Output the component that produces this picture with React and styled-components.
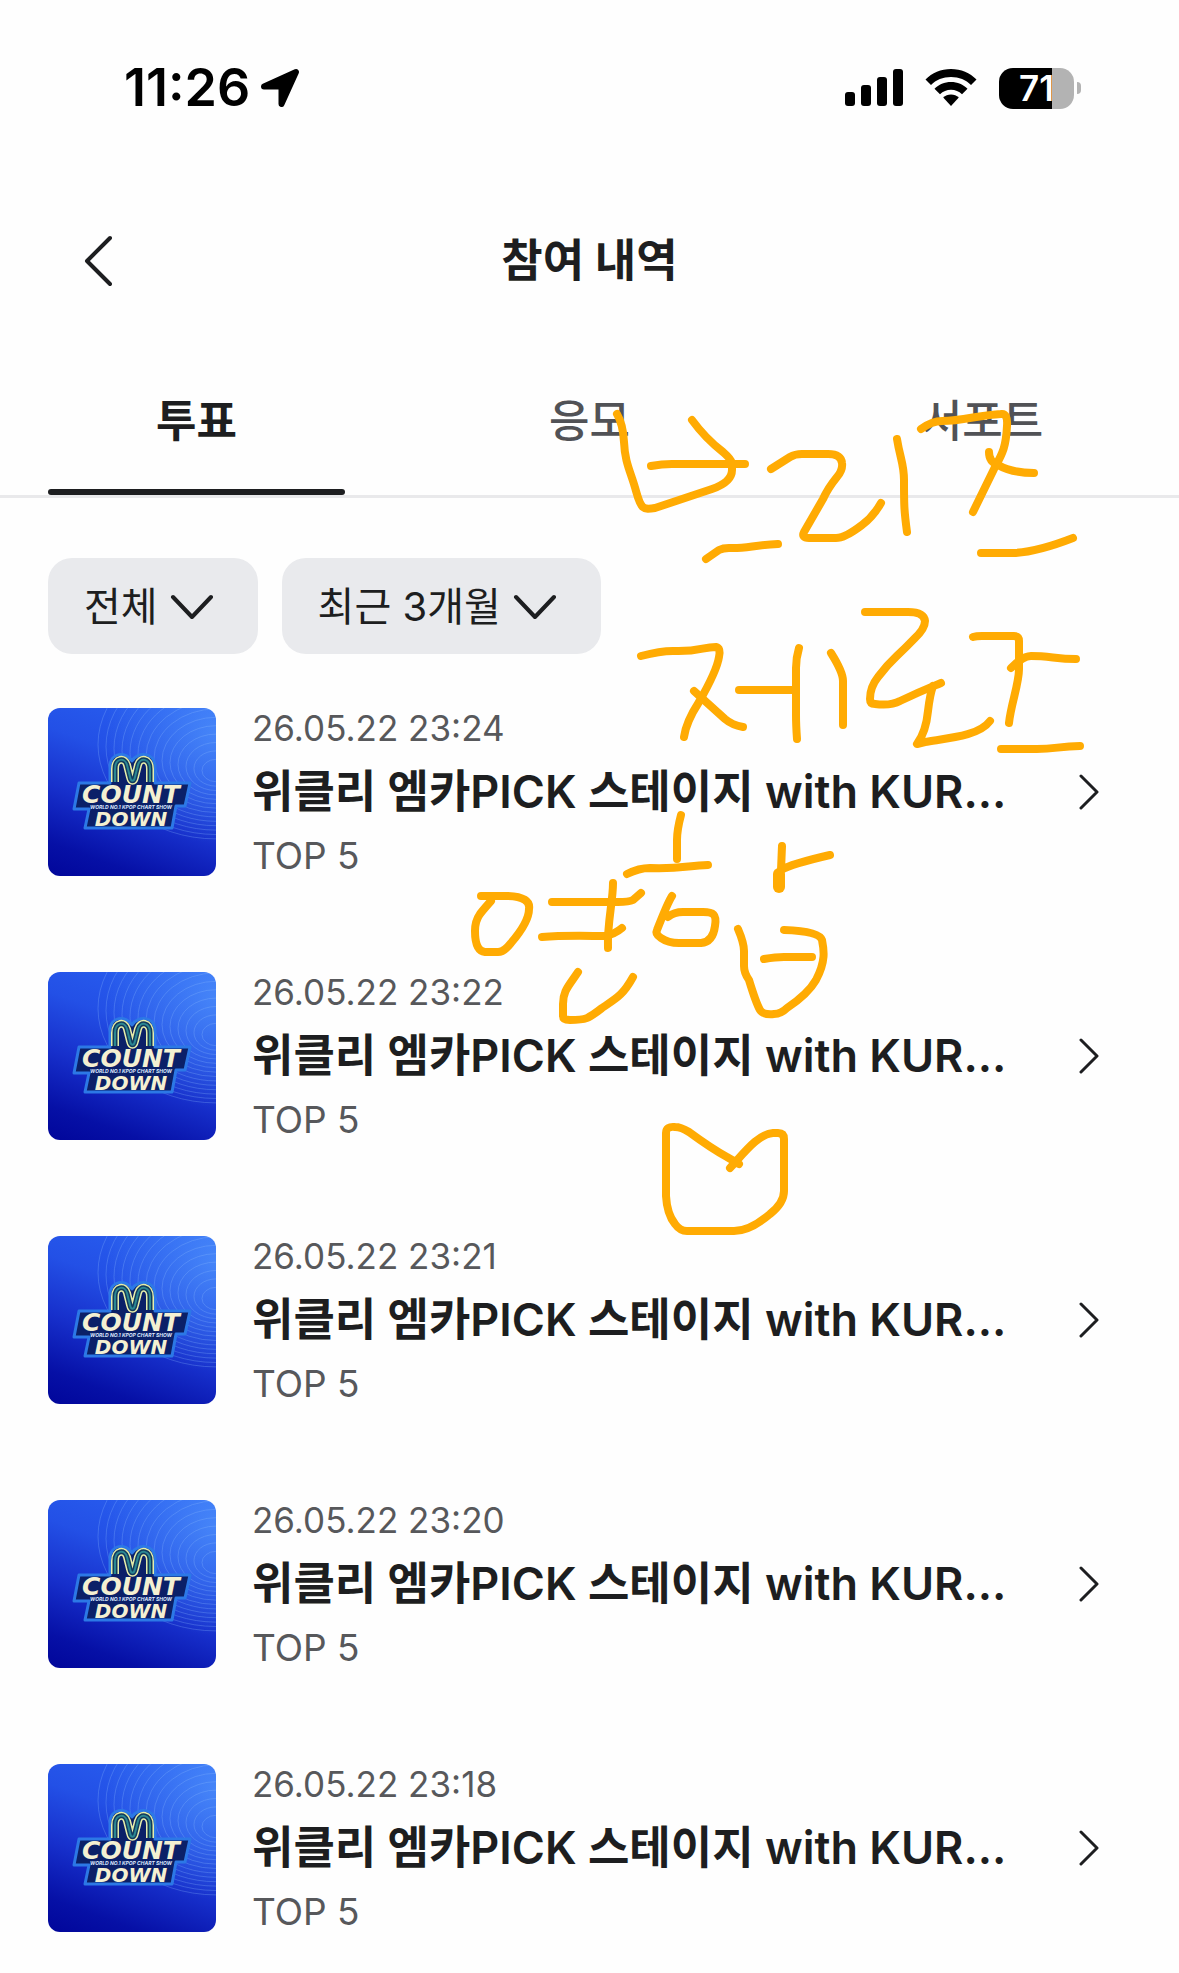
import { useState } from 'react';
import styled, { createGlobalStyle } from 'styled-components';

const GlobalStyle = createGlobalStyle`
    * {
        box-sizing: border-box;
    }
    body {
        margin: 0;
        background: #fefefe;
        color: #1d1e20;
        font-family: Inter, 'Noto Sans CJK KR', sans-serif;
    }
    button, select {
        font-family: inherit;
        color: inherit;
    }
`;

const Page = styled.div`
    position: relative;
    padding-bottom: 40px;
`;
const StatusBar = styled.div`
    display: flex;
    align-items: center;
    justify-content: space-between;
    height: 176px;
    padding: 0 98px 0 124px;
    color: #000;
`;
const StatusGroup = styled.div`
    display: flex;
    align-items: center;
    gap: ${({ $gap }) => $gap}px;
`;
const Time = styled.span`
    font-size: 52px;
    line-height: 60px;
    font-weight: 600;
`;
const Battery = styled.div`
    display: flex;
    align-items: center;
    gap: 3px;
`;
const BatteryBody = styled.div`
    width: 75px;
    height: 41px;
    border-radius: 14px;
    background: linear-gradient(to right, #000 71%, #b3b3b3 71%);
    color: #fff;
    font-size: 35px;
    line-height: 41px;
    font-weight: 600;
    text-align: center;
`;
const BatteryTip = styled.div`
    width: 4px;
    height: 12px;
    border-radius: 0 6px 6px 0;
    background: #b3b3b3;
`;

const Header = styled.header`
    display: grid;
    grid-template-columns: 100px 1fr 100px;
    align-items: center;
    height: 170px;
    padding: 0 48px;
`;
const BackButton = styled.button`
    display: flex;
    padding: 0 0 0 36px;
    border: 0;
    background: none;
`;
const Title = styled.h1`
    margin: 0;
    font-size: 45px;
    line-height: 60px;
    font-weight: 700;
    text-align: center;
`;

const Tabs = styled.div`
    display: flex;
    border-bottom: 3px solid #e9e9eb;
`;
const Tab = styled.button`
    display: flex;
    flex: 1;
    flex-direction: column;
    justify-content: flex-end;
    height: 149px;
    padding: 0 48px;
    border: 0;
    background: none;
    color: ${({ $active }) => ($active ? '#1d1e20' : '#515256')};
    font-size: 44px;
    font-weight: ${({ $active }) => ($active ? 700 : 500)};
    text-align: center;

    &::after {
        content: '';
        width: 100%;
        height: 6px;
        border-radius: 3px;
        background: ${({ $active }) => ($active ? '#1d1e20' : 'transparent')};
    }
`;
const TabLabel = styled.span`
    display: block;
    width: 100%;
    padding-bottom: 36px;
    line-height: 64px;
`;

const Filters = styled.div`
    display: flex;
    gap: 24px;
    padding: 60px 48px 54px;
`;
const Filter = styled.label`
    display: grid;
    align-items: center;

    & > * {
        grid-area: 1 / 1;
    }
    svg {
        justify-self: end;
        margin-right: 44px;
        pointer-events: none;
    }
`;
const FilterSelect = styled.select`
    appearance: none;
    height: 96px;
    padding: 0 100px 0 36px;
    border: 0;
    border-radius: 24px;
    background: #e9eaed;
    font-size: 40px;
    field-sizing: content;
`;

const List = styled.ul`
    display: flex;
    flex-direction: column;
    gap: 96px;
    margin: 0;
    padding: 0 48px;
    list-style: none;
`;
const Row = styled.a`
    display: flex;
    align-items: center;
    height: 168px;
    padding-right: 32px;
    color: inherit;
    text-decoration: none;
`;
const Thumb = styled.div`
    flex: none;
    width: 168px;
    height: 168px;
    margin-right: 36px;
    overflow: hidden;
    border-radius: 12px;
    background:
        radial-gradient(circle at 100% 15%, rgba(90, 160, 255, 0.6), rgba(60, 120, 255, 0) 50%),
        linear-gradient(200deg, #2a62f2 0%, #2350e6 35%, #1730cc 60%, #0610a6 85%, #01069a 100%);
`;
const RowText = styled.div`
    flex: 1;
    min-width: 0;
`;
const RowDate = styled.p`
    margin: 0;
    color: #57585b;
    font-size: 35px;
    line-height: 46px;
`;
const RowTitle = styled.h2`
    margin: 0;
    font-size: 45px;
    line-height: 82px;
    font-weight: 600;
    white-space: nowrap;
`;
const RowChoice = styled.p`
    margin: 0;
    color: #57585b;
    font-size: 37px;
    line-height: 46px;
`;

const Doodle = styled.svg`
    position: absolute;
    top: 0;
    left: 0;
    width: 100%;
    pointer-events: none;
`;

const LocationIcon = () => (
    <svg width="40" height="40" viewBox="0 0 40 40" aria-hidden="true">
        <path d="M4 18.500 36 4 21.500 36V18.500Z" stroke="#000" strokeWidth="6" strokeLinejoin="round" />
    </svg>
);

const SignalIcon = () => (
    <svg width="58" height="38" viewBox="0 0 58 38" aria-hidden="true">
        <rect x="0" y="23" width="10" height="14" rx="3" />
        <rect x="16" y="16" width="10" height="21" rx="3" />
        <rect x="32" y="8" width="10" height="29" rx="3" />
        <rect x="48" y="0" width="10" height="37" rx="3" />
    </svg>
);

const WifiIcon = () => (
    <svg width="52" height="38" viewBox="0 0 52 38" aria-hidden="true">
        <path d="M26 0C16 0 7 4 .5 10.500L6 16C11 10.800 18 8 26 8s15 2.800 20 8l5.500-5.500C45 4 36 0 26 0Z" />
        <path d="M26 13c-6.500 0-12.300 2.500-16.500 6.800L15 25.200c3-2.900 6.800-4.500 11-4.500s8 1.600 11 4.500l5.500-5.400C38.300 15.500 32.500 13 26 13Z" />
        <path d="M26 25.500c-3 0-5.700 1.200-7.800 3L26 37l7.800-8.500c-2.100-1.800-4.800-3-7.800-3Z" />
    </svg>
);

const Chevron = ({ width, height, d, stroke }) => (
    <svg
        width={width}
        height={height}
        viewBox={`0 0 ${width} ${height}`}
        fill="none"
        stroke="#1d1e20"
        strokeWidth={stroke}
        strokeLinecap="round"
        strokeLinejoin="round"
        aria-hidden="true"
    >
        <path d={d} />
    </svg>
);

const RINGS = [14, 22, 30, 38, 46, 54, 62, 70, 78, 86, 94, 102, 110, 118];
const LOGO_M = 'M67 74V61C67 50 77 49 79 57L82 69C83 74 86 74 87 69L90 57C92 49 102 50 102 61V74';

const LogoWord = ({ y, size, children }) => (
    <text
        x="83"
        y={y}
        fill="#f4f0d2"
        fontFamily="'DejaVu Sans', sans-serif"
        fontWeight="700"
        fontStyle="italic"
        fontSize={size}
        textAnchor="middle"
    >
        {children}
    </text>
);

const CountdownLogo = () => (
    <svg width="168" height="168" viewBox="0 0 168 168" role="img" aria-label="M Countdown">
        <g fill="none" stroke="#8fc0ff" strokeOpacity="0.28">
            {RINGS.map((r) => (
                <ellipse key={r} cx="168" cy={66 - r / 4} rx={r} ry={r * 0.8} />
            ))}
        </g>
        <path
            d="M62 75V59C62 44 78 43 84 53C90 43 107 44 107 59V75H142L137 98H128L124 120H37L41 101H26L31 75Z"
            fill="#0b2068"
            stroke="#2c78e6"
            strokeWidth="3"
            strokeLinejoin="round"
        />
        <g fill="none">
            <path d={LOGO_M} stroke="#e6edaa" strokeWidth="8" />
            <path d={LOGO_M} stroke="#123a5c" strokeWidth="5" />
            <path d={LOGO_M} stroke="#2b8792" strokeWidth="2" />
        </g>
        <LogoWord y={95} size={25}>COUNT</LogoWord>
        <LogoWord y={118} size={20}>DOWN</LogoWord>
        <text
            x="83"
            y="101"
            fill="#dce8ff"
            fontFamily="Inter, sans-serif"
            fontSize="5"
            fontStyle="italic"
            fontWeight="700"
            textAnchor="middle"
        >
            WORLD NO.1 KPOP CHART SHOW
        </text>
    </svg>
);

const STROKES = [
    // first line
    'M617 414Q623 424 624 442C625 464 631 472 636 491C641 509 643 510 655 508L712 489Q732 482 732 470V463Q731 459 723 452Q705 438 692 420',
    'M651 466Q662 464 672 464H745',
    'M706 559 719 550Q723 548 729 548C745 549 754 545 778 544',
    'M771 469 790 457Q795 454 802 454H828Q841 454 842 463Q843 470 837 477Q828 488 823 499L804 532Q801 538 809 538H836Q845 538 862 525Q873 517 881 503',
    'M897 439C900 458 904 464 904 480C904 504 904 510 907 532',
    'M921 429Q932 421 942 421C963 421 979 415 1001 414Q1008 413 1007 426C1006 446 1003 453 995 467L973 512',
    'M989 452Q989 462 998 465Q1012 473 1034 473',
    'M981 553H1014C1035 552 1055 545 1073 538',
    // second line
    'M641 656Q660 651 673 651C700 652 702 647 716 647Q721 648 719 657C717 670 707 688 699 702Q686 722 684 737',
    'M694 691 725 719Q732 725 743 727',
    'M739 690H794',
    'M799 648Q796 658 796 668V715Q796 725 797 739',
    'M831 653Q843 672 843 681V725',
    'M865 612H908Q924 612 925 621Q925 629 914 639C893 661 893 657 878 677Q870 687 870 699Q870 704 875 704Q891 706 900 701C921 691 924 690 941 683',
    'M933 686Q930 694 928 711Q926 732 917 744L925 742C949 738 979 736 990 721',
    'M973 637Q976 636 982 636H1014Q1019 636 1019 641V669C1019 684 1011 704 1009 723',
    'M1011 668Q1023 656 1031 656C1050 656 1056 659 1076 659',
    'M1001 749H1031C1054 750 1058 746 1080 746',
    // third line
    'M481 896H508Q531 897 529 909Q529 922 511 943Q504 952 498 952H485Q475 951 475 931Q475 921 480 914 483 910 491 901',
    'M552 902H618Q629 902 633 900L641 893',
    'M542 937C565 935 590 936 605 936Q615 934 622 928',
    'M613 883C613 902 607 923 608 948',
    'M578 972C568 987 563 991 563 1004V1016Q563 1020 570 1020C586 1020 588 1019 602 1008C617 998 623 995 633 977',
    'M681 815Q677 830 677 840V859',
    'M627 874Q639 868 650 868C680 869 686 866 708 865',
    'M672 896Q668 902 657 930Q655 934 661 938Q668 943 679 943H701Q713 942 715 926C717 914 713 912 703 912H683Q674 912 668 917',
    'M782 846 781 870Q791 864 830 855',
    'M738 929Q744 943 744 951V966Q744 973 749 980Q756 1003 760 1010Q763 1015 774 1014Q781 1014 787 1008Q808 994 816 980C826 961 824 950 822 940Q819 931 784 930',
    'M764 959Q776 957 784 957H812',
    // cat
    'M730 1168C744 1153 758 1134 773 1133H778Q784 1133 784 1139V1191Q784 1203 770 1214Q750 1231 734 1231H687Q680 1231 675 1224Q667 1214 666 1196V1133Q666 1126 675 1127Q681 1127 689 1132C704 1143 716 1151 727 1157L739 1164',
];

const Scribbles = () => (
    <Doodle viewBox="0 0 1179 1973" aria-hidden="true">
        <g fill="none" stroke="#ffab03" strokeWidth="8" strokeLinecap="round" strokeLinejoin="round">
            {STROKES.map((d) => (
                <path key={d} d={d} />
            ))}
            <path d="M779 874V887" strokeWidth="12" />
        </g>
    </Doodle>
);

const TABS = ['투표', '응모', '서포트'];

const FILTERS = [
    { name: '구분', value: '전체' },
    { name: '기간', value: '최근 3개월' },
];

const VOTES = ['23:24', '23:22', '23:21', '23:20', '23:18'];

const App = () => {
    const [tab, setTab] = useState(TABS[0]);

    return (
        <Page>
            <GlobalStyle />
            <StatusBar>
                <StatusGroup $gap={10}>
                    <Time>11:26</Time>
                    <LocationIcon />
                </StatusGroup>
                <StatusGroup $gap={22}>
                    <SignalIcon />
                    <WifiIcon />
                    <Battery>
                        <BatteryBody>71</BatteryBody>
                        <BatteryTip />
                    </Battery>
                </StatusGroup>
            </StatusBar>
            <Header>
                <BackButton aria-label="뒤로">
                    <Chevron width={28} height={52} stroke={4} d="M26 3 3 26 26 49" />
                </BackButton>
                <Title>참여 내역</Title>
            </Header>
            <Tabs role="tablist">
                {TABS.map((name) => (
                    <Tab
                        key={name}
                        role="tab"
                        aria-selected={tab === name}
                        $active={tab === name}
                        onClick={() => setTab(name)}
                    >
                        <TabLabel>{name}</TabLabel>
                    </Tab>
                ))}
            </Tabs>
            <main>
                <Filters>
                    {FILTERS.map(({ name, value }) => (
                        <Filter key={name}>
                            <FilterSelect aria-label={name}>
                                <option>{value}</option>
                            </FilterSelect>
                            <Chevron width={44} height={26} stroke={4} d="M3 4 22 24 41 4" />
                        </Filter>
                    ))}
                </Filters>
                <List>
                    {VOTES.map((time) => (
                        <li key={time}>
                            <Row href="#vote">
                                <Thumb>
                                    <CountdownLogo />
                                </Thumb>
                                <RowText>
                                    <RowDate>26.05.22 {time}</RowDate>
                                    <RowTitle>위클리 엠카PICK 스테이지 with KUR...</RowTitle>
                                    <RowChoice>TOP 5</RowChoice>
                                </RowText>
                                <Chevron width={20} height={36} stroke={3} d="M2 2 18 18 2 34" />
                            </Row>
                        </li>
                    ))}
                </List>
            </main>
            <Scribbles />
        </Page>
    );
};

export default App;
